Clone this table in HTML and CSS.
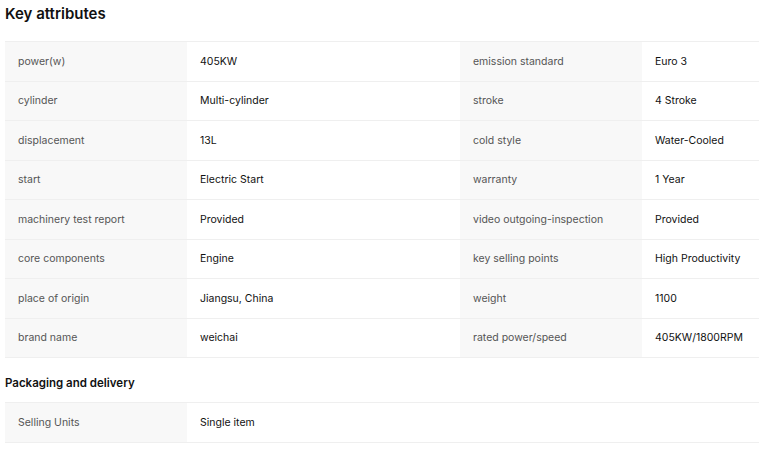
FILE: index.html
```html
<!DOCTYPE html>
<html lang="en">
<head>
    <meta charset="UTF-8">
    <meta name="viewport" content="width=device-width, initial-scale=1.0">
    <title>Key attributes</title>
    <link rel="stylesheet" href="styles.css">
</head>
<body>
    <div class="attributes">
        <h2 class="title">Key attributes</h2>
        <table class="attr-table">
            <colgroup>
                <col class="col-label">
                <col class="col-value">
                <col class="col-label">
                <col>
            </colgroup>
            <tr>
                <td class="label">power(w)</td><td class="value">405KW</td>
                <td class="label">emission standard</td><td class="value">Euro 3</td>
            </tr>
            <tr>
                <td class="label">cylinder</td><td class="value">Multi-cylinder</td>
                <td class="label">stroke</td><td class="value">4 Stroke</td>
            </tr>
            <tr>
                <td class="label">displacement</td><td class="value">13L</td>
                <td class="label">cold style</td><td class="value">Water-Cooled</td>
            </tr>
            <tr>
                <td class="label">start</td><td class="value">Electric Start</td>
                <td class="label">warranty</td><td class="value">1 Year</td>
            </tr>
            <tr>
                <td class="label">machinery test report</td><td class="value">Provided</td>
                <td class="label">video outgoing-inspection</td><td class="value">Provided</td>
            </tr>
            <tr>
                <td class="label">core components</td><td class="value">Engine</td>
                <td class="label">key selling points</td><td class="value">High Productivity</td>
            </tr>
            <tr>
                <td class="label">place of origin</td><td class="value">Jiangsu, China</td>
                <td class="label">weight</td><td class="value">1100</td>
            </tr>
            <tr>
                <td class="label">brand name</td><td class="value">weichai</td>
                <td class="label">rated power/speed</td><td class="value">405KW/1800RPM</td>
            </tr>
        </table>

        <h3 class="subtitle">Packaging and delivery</h3>
        <table class="attr-table">
            <colgroup>
                <col class="col-label">
                <col>
            </colgroup>
            <tr>
                <td class="label">Selling Units</td><td class="value">Single item</td>
            </tr>
        </table>
    </div>
</body>
</html>
```

FILE: styles.css
```css
body {
    margin: 0;
    padding: 0 0 0 5px;
    font-family: Inter, "Open Sans", Arial, sans-serif;
    background: #fff;
    overflow: hidden;
}

.title {
    margin: 0;
    height: 41px;
    padding-top: 4px;
    box-sizing: border-box;
    font-size: 15px;
    font-weight: 600;
    color: #111;
    line-height: 20px;
}

.subtitle {
    margin: 0;
    height: 44px;
    padding-top: 17px;
    box-sizing: border-box;
    font-size: 11.5px;
    font-weight: 600;
    color: #111;
    line-height: 16px;
}

.attr-table {
    width: 754px;
    border-collapse: collapse;
    table-layout: fixed;
    font-size: 10.5px;
}

.col-label {
    width: 182px;
}

.col-value {
    width: 273px;
}

.attr-table td {
    height: 39.5px;
    padding: 0 13px;
    box-sizing: border-box;
    border-top: 1px solid #efefef;
    border-bottom: 1px solid #efefef;
    white-space: nowrap;
    overflow: hidden;
}

.label {
    background: #f8f8f8;
    color: #555;
}

.value {
    background: #fff;
    color: #111;
    font-weight: 400;
}
```
